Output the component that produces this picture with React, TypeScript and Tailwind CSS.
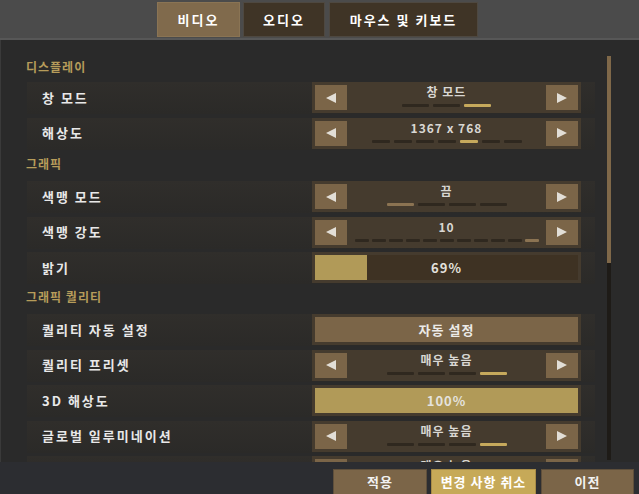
import React from "react";

const FONT = "font-['Noto_Sans_CJK_KR','Noto_Sans',sans-serif]";

function Arrow({ dir }: { dir: "l" | "r" }) {
  return (
    <div className="w-[32px] h-[25px] bg-[#7b6548] flex items-center justify-center shrink-0">
      <svg width="10" height="10" viewBox="0 0 10 10">
        {dir === "l" ? (
          <polygon points="10,0 10,10 0,5" fill="#e2ded6" />
        ) : (
          <polygon points="0,0 0,10 10,5" fill="#e2ded6" />
        )}
      </svg>
    </div>
  );
}

function Bars({
  count,
  active,
  w,
  gap,
  color,
}: {
  count: number;
  active: number;
  w: number;
  gap: number;
  color: string;
}) {
  return (
    <div className="flex mt-[5px]" style={{ gap }}>
      {Array.from({ length: count }).map((_, i) => (
        <div
          key={i}
          className="h-[3px] rounded-[1px]"
          style={{ width: w, background: i === active ? color : "#2f281f" }}
        />
      ))}
    </div>
  );
}

function Selector({
  value,
  count,
  active,
  w,
  gap,
  color,
}: {
  value: string;
  count: number;
  active: number;
  w: number;
  gap: number;
  color: string;
}) {
  return (
    <div className="w-[269px] h-[31px] bg-[#453b2e] p-[3px] flex">
      <Arrow dir="l" />
      <div className="flex-1 flex flex-col items-center">
        <div className="text-[12px] leading-[14px] tracking-[1px] text-[#d9d7d3]">{value}</div>
        <Bars count={count} active={active} w={w} gap={gap} color={color} />
      </div>
      <Arrow dir="r" />
    </div>
  );
}

function Slider({ value, fill }: { value: string; fill: number }) {
  return (
    <div className="w-[269px] h-[31px] bg-[#453b2e] p-[3px]">
      <div className="relative h-[25px] bg-[#3e3223] flex">
        <div className="h-full bg-[#b19a58]" style={{ width: fill }} />
        <div className="absolute inset-0 flex items-center justify-center text-[13px] tracking-[1px] text-[#e4e2de]">
          {value}
        </div>
      </div>
    </div>
  );
}

function ButtonCtl({ label }: { label: string }) {
  return (
    <div className="w-[269px] h-[31px] bg-[#453b2e] p-[3px]">
      <div className="h-[25px] bg-[#7b6548] flex items-center justify-center text-[13px] tracking-[1px] text-[#ecebe8]">
        {label}
      </div>
    </div>
  );
}

function Row({ label, children }: { label: string; children: React.ReactNode }) {
  return (
    <div className="h-[32px] mb-[3.5px] w-[568px] shrink-0 flex items-start justify-between bg-gradient-to-b from-[#302e2b] to-[#2b2a28]">
      <div className="h-[31px] flex items-center pl-[15px] text-[13px] tracking-[2px] text-[#e8e8e8]">
        {label}
      </div>
      <div className="mr-[14px]">{children}</div>
    </div>
  );
}

function Section({ title, className }: { title: string; className: string }) {
  return (
    <div className={`h-[16px] shrink-0 leading-[16px] -ml-[1px] text-[12px] tracking-[1px] text-[#b69c5a] ${className}`}>
      {title}
    </div>
  );
}

export default function App() {
  const gold = "#c6a95c";
  const muted = "#8b7352";
  return (
    <div className={`w-[639px] h-[494px] overflow-hidden bg-[#2a2a2a] flex flex-col font-bold ${FONT}`}>
      {/* header */}
      <div className="h-[40px] shrink-0 bg-[#4b4b4b] border-b-2 border-[#575757] flex items-start pt-[2px] pl-[157px]">
        <div className="w-[83px] h-[35px] bg-[#806a4c] border border-[#8a7454] flex items-center justify-center text-[13px] tracking-[2px] text-white">
          비디오
        </div>
        <div className="w-[82px] h-[35px] ml-[3px] bg-[#3f3426] border border-[#4e4840] flex items-center justify-center text-[13px] tracking-[2px] text-white">
          오디오
        </div>
        <div className="w-[149px] h-[35px] ml-[4px] bg-[#3f3426] border border-[#4e4840] flex items-center justify-center text-[13px] tracking-[2px] text-white">
          마우스 및 키보드
        </div>
      </div>

      {/* content */}
      <div className="h-[422px] shrink-0 flex overflow-hidden border-l border-[#3a3a3a]">
        <div className="w-[595px] pl-[26px] flex flex-col shrink-0">
          <Section title="디스플레이" className="mt-[19px] mb-[7px]" />
          <Row label="창 모드">
            <Selector value="창 모드" count={3} active={2} w={27} gap={4} color={gold} />
          </Row>
          <Row label="해상도">
            <Selector value="1367 x 768" count={7} active={4} w={18} gap={4} color={gold} />
          </Row>
          <Section title="그래픽" className="mt-[2.5px] mb-[9.5px]" />
          <Row label="색맹 모드">
            <Selector value="끔" count={4} active={0} w={27} gap={4} color={muted} />
          </Row>
          <Row label="색맹 강도">
            <Selector value="10" count={11} active={10} w={14} gap={3} color={muted} />
          </Row>
          <Row label="밝기">
            <Slider value="69%" fill={52} />
          </Row>
          <Section title="그래픽 퀄리티" className="mt-[1.5px] mb-[9px]" />
          <Row label="퀄리티 자동 설정">
            <ButtonCtl label="자동 설정" />
          </Row>
          <Row label="퀄리티 프리셋">
            <Selector value="매우 높음" count={4} active={3} w={27} gap={4} color={gold} />
          </Row>
          <Row label="3D 해상도">
            <Slider value="100%" fill={263} />
          </Row>
          <Row label="글로벌 일루미네이션">
            <Selector value="매우 높음" count={4} active={3} w={27} gap={4} color={gold} />
          </Row>
          <Row label="">
            <Selector value="매우 높음" count={4} active={3} w={27} gap={4} color={gold} />
          </Row>
        </div>
        {/* scrollbar */}
        <div className="ml-[11px] mt-[16px] w-[4px] h-[404px] flex flex-col shrink-0">
          <div className="h-[207px] bg-[#7f6849]" />
          <div className="flex-1 bg-[#1e1b17]" />
        </div>
      </div>

      {/* bottom bar */}
      <div className="h-[32px] shrink-0 bg-[#2c2d31] flex justify-end items-start pt-[7px] pr-[5px] overflow-hidden">
        <div className="w-[94px] h-[26px] bg-[#7b6548] border border-[#5f4f3b] flex items-center justify-center text-[13px] tracking-[1px] text-[#f2f2f2]">
          적용
        </div>
        <div className="w-[105px] h-[26px] ml-[4px] bg-[#c6a958] border border-[#a88c48] flex items-center justify-center text-[13px] tracking-[1px] text-white">
          변경 사항 취소
        </div>
        <div className="w-[93px] h-[26px] ml-[5px] bg-[#7b6548] border border-[#5f4f3b] flex items-center justify-center text-[13px] tracking-[1px] text-[#f2f2f2]">
          이전
        </div>
      </div>
    </div>
  );
}
